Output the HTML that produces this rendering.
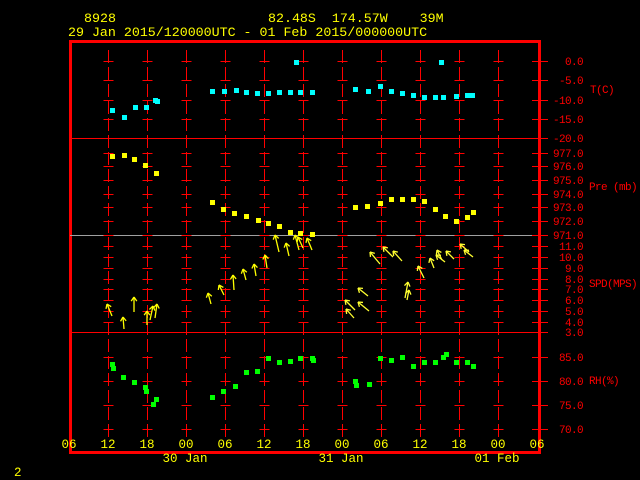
<!DOCTYPE html>
<html><head><style>
html,body{margin:0;padding:0;background:#000;}
svg{display:block;}
text{font-family:"Liberation Mono",monospace;white-space:pre;}
.h{font-size:13.3px}
.s{font-size:11px;letter-spacing:-0.6px}
.b{font-size:12.5px}
</style></head><body>
<svg width="640" height="480" viewBox="0 0 640 480" xmlns="http://www.w3.org/2000/svg" xml:space="preserve">
<rect width="640" height="480" fill="#000"/>
<g fill="#ffff00">
<text class="h" x="84" y="22">8928</text>
<text class="h" x="268" y="22" xml:space="preserve">82.48S  174.57W    39M</text>
<text class="h" x="68" y="36" xml:space="preserve">29 Jan 2015/120000UTC - 01 Feb 2015/000000UTC</text>
<text class="b" x="14" y="476">2</text>
</g>
<rect x="70.5" y="41.5" width="469" height="411" fill="none" stroke="#ff0000" stroke-width="3"/>
<g stroke="#ff0000" stroke-width="1">
<line x1="70" y1="138.5" x2="540" y2="138.5"/>
<line x1="70" y1="235.5" x2="540" y2="235.5" stroke="#a0a0a0"/>
<line x1="70" y1="332.5" x2="540" y2="332.5"/>
</g>
<g id="grid" stroke="#ff0000" stroke-width="1"></g>
<g id="labels" fill="#ff0000" text-anchor="end"></g>
<g fill="#ff0000">
<text class="s" x="590" y="93">T(C)</text>
<text class="s" x="589" y="190" xml:space="preserve">Pre (mb)</text>
<text class="s" x="589" y="287">SPD(MPS)</text>
<text class="s" x="589" y="384">RH(%)</text>
</g>
<g fill="#ffff00" text-anchor="middle">
<text class="b" x="69" y="448">06</text><text class="b" x="108" y="448">12</text><text class="b" x="147" y="448">18</text><text class="b" x="186" y="448">00</text>
<text class="b" x="225" y="448">06</text><text class="b" x="264" y="448">12</text><text class="b" x="303" y="448">18</text><text class="b" x="342" y="448">00</text>
<text class="b" x="381" y="448">06</text><text class="b" x="420" y="448">12</text><text class="b" x="459" y="448">18</text><text class="b" x="498" y="448">00</text>
<text class="b" x="537" y="448">06</text>
<text class="b" x="185" y="462" xml:space="preserve">30 Jan</text><text class="b" x="341" y="462" xml:space="preserve">31 Jan</text><text class="b" x="497" y="462" xml:space="preserve">01 Feb</text>
</g>
<g id="data"></g>
<script>
var NS="http://www.w3.org/2000/svg";
function el(p,t,a){var e=document.createElementNS(NS,t);for(var k in a)e.setAttribute(k,a[k]);p.appendChild(e);return e;}
var g=document.getElementById('grid'),L=document.getElementById('labels'),D=document.getElementById('data');
var ys=[[61,'0.0'],[80,'-5.0'],[100,'-10.0'],[119,'-15.0'],[138,'-20.0'],
[153,'977.0'],[166,'976.0'],[180,'975.0'],[194,'974.0'],[207,'973.0'],[221,'972.0'],[235,'971.0'],
[246,'11.0'],[257,'10.0'],[268,'9.0'],[279,'8.0'],[289,'7.0'],[300,'6.0'],[311,'5.0'],[322,'4.0'],[332,'3.0'],
[357,'85.0'],[381,'80.0'],[405,'75.0'],[429,'70.0']];
for(var i=1;i<=11;i++){var x=69+39*i+.5;
 el(g,'line',{x1:x,y1:50,x2:x,y2:440,'stroke-dasharray':'13,4'});
 ys.forEach(function(y){el(g,'line',{x1:x-5,y1:y[0]+.5,x2:x+5,y2:y[0]+.5});});
}
ys.forEach(function(y){el(g,'line',{x1:532,y1:y[0]+.5,x2:548,y2:y[0]+.5,'stroke-width':1});
 var t=el(L,'text',{x:583,y:y[0]+4,'class':'s'});t.textContent=y[1];});
function pts(a,c){a.forEach(function(p){el(D,'rect',{x:p[0]-2,y:p[1]-2,width:5,height:5,fill:c});});}
pts([[112,110],[124,117],[135,107],[146,107],[155,100],[157,101],[212,91],[224,91],[236,90],[246,92],[257,93],[268,93],[279,92],[290,92],[300,92],[312,92],[296,62],[355,89],[368,91],[380,86],[391,91],[402,93],[413,95],[424,97],[435,97],[443,97],[456,96],[467,95],[472,95],[441,62]],'#00ffff');
pts([[112,156],[124,155],[134,159],[145,165],[156,173],[212,202],[223,209],[234,213],[246,216],[258,220],[268,223],[279,226],[290,232],[300,233],[312,234],[355,207],[367,206],[380,203],[391,199],[402,199],[413,199],[424,201],[435,209],[445,216],[456,221],[467,217],[473,212]],'#ffff00');
pts([[112,364],[113,368],[123,377],[134,382],[145,387],[146,391],[153,404],[156,399],[212,397],[223,391],[235,386],[246,372],[257,371],[268,358],[279,362],[290,361],[300,358],[312,358],[313,360],[355,381],[356,385],[369,384],[380,358],[391,360],[402,357],[413,366],[424,362],[435,362],[443,357],[446,354],[456,362],[467,362],[473,366]],'#00ff00');
function arr(hx,hy,tx,ty,c){var dx=tx-hx,dy=ty-hy,l=Math.sqrt(dx*dx+dy*dy);dx/=l;dy/=l;
 el(D,'line',{x1:tx,y1:ty,x2:hx,y2:hy,stroke:c,'stroke-width':1.3});
 var a=0.6,s=5;
 [a,-a].forEach(function(an){var cx=dx*Math.cos(an)-dy*Math.sin(an),cy=dx*Math.sin(an)+dy*Math.cos(an);
  el(D,'line',{x1:hx,y1:hy,x2:hx+cx*s,y2:hy+cy*s,stroke:c,'stroke-width':1.3});});}
[[107,304,112,316],[123,317,124,329],[134,297,134,312],[147,311,147,325],[157,304,155,318],[153,306,150,320],
[208,293,211,304],[219,285,224,295],[233,275,234,290],[243,269,246,280],[254,264,256,276],[265,255,267,268],
[275,235,279,252],[286,243,289,256],[295,235,299,250],[307,238,312,250],[298,237,303,248]].forEach(function(a){arr(a[0],a[1],a[2],a[3],'#ffff00');});
[[345,300,355,310],[346,309,354,318],[358,288,368,296],[358,302,369,311],[370,252,380,264],[383,247,393,257],[393,251,402,261],
[408,282,405,298],[409,290,407,300],[418,266,424,278],[430,258,434,268],[436,255,445,262],[437,250,442,260],[446,251,454,259],[460,244,469,252],[464,250,473,257]].forEach(function(a){arr(a[0],a[1],a[2],a[3],'#ffff30');});
</script>
</svg>
</body></html>
